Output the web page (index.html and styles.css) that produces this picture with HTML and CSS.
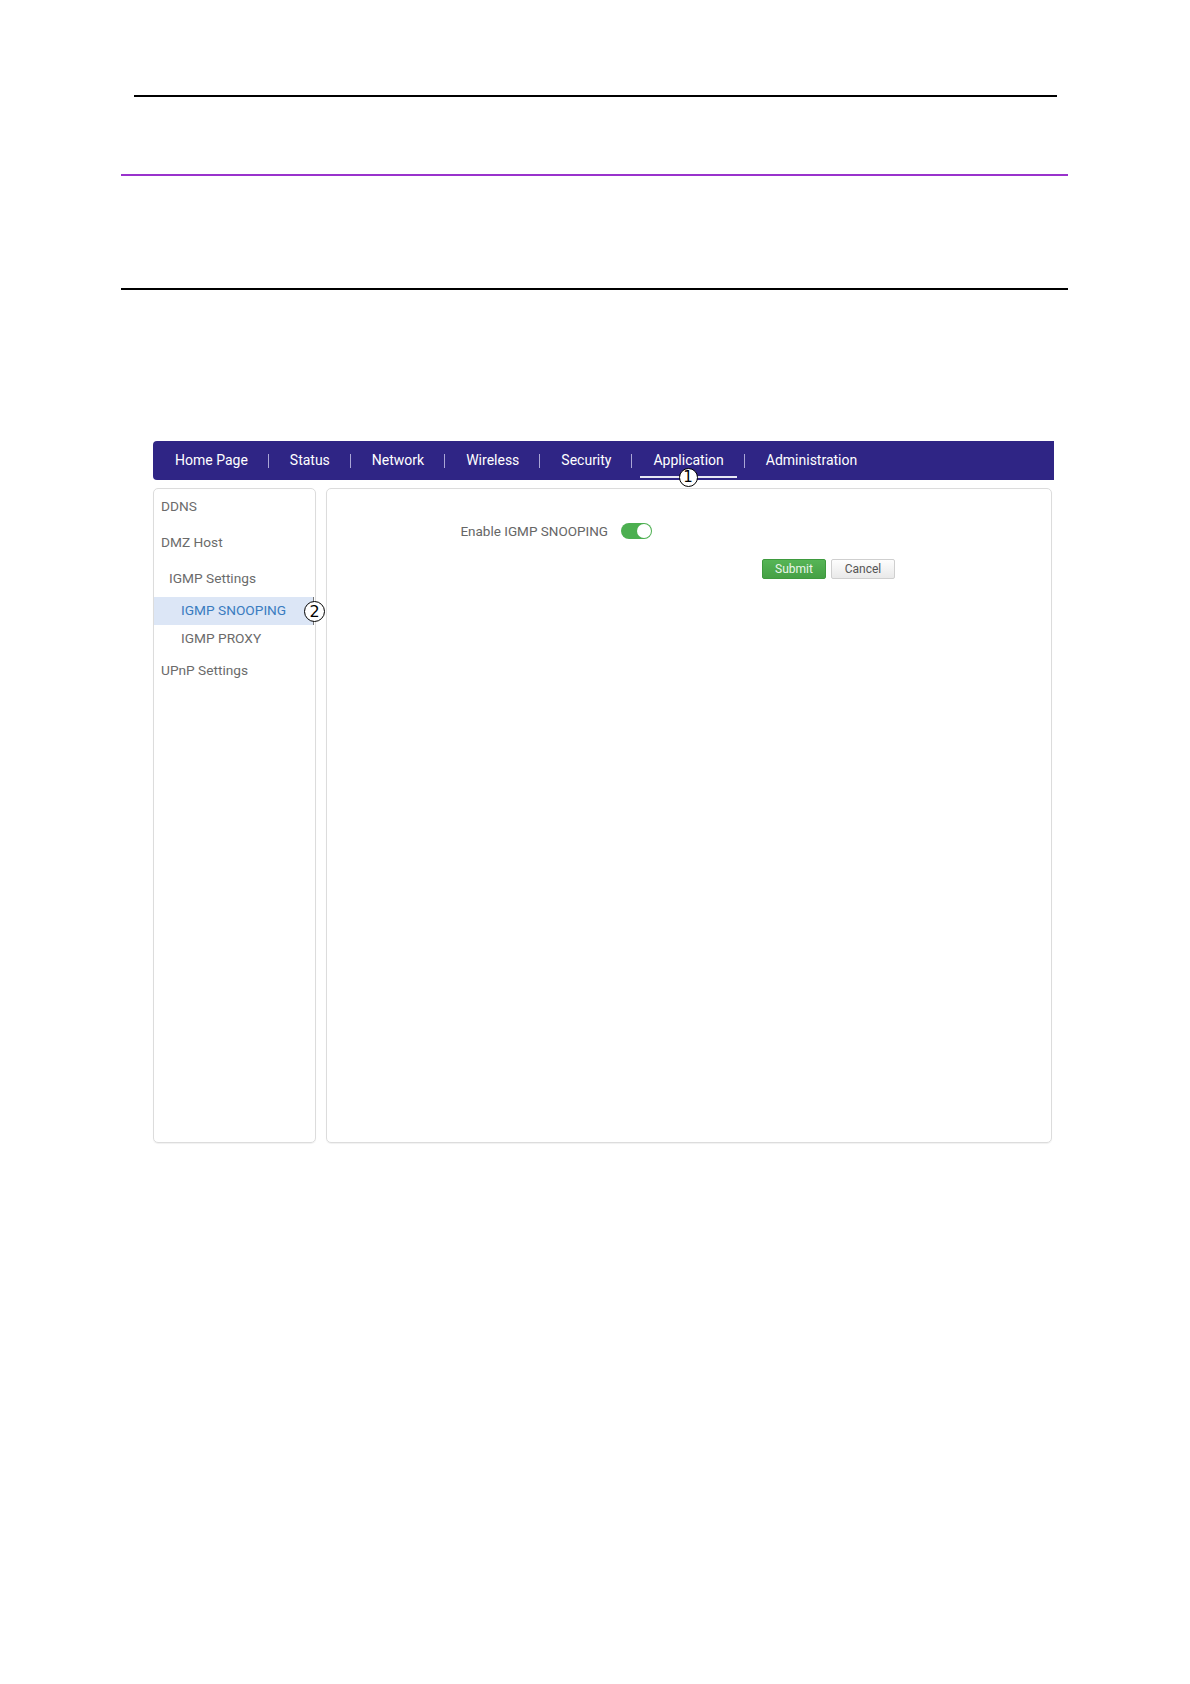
FILE: index.html
```html
<!DOCTYPE html>
<html lang="en">
<head>
    <meta charset="UTF-8">
    <meta name="viewport" content="width=device-width, initial-scale=1.0">
    <title>IGMP SNOOPING</title>
    <link rel="stylesheet" href="styles.css">
</head>
<body>
    <div class="page">
        <!-- Lineas del documento -->
        <div class="rule rule-top"></div>
        <div class="rule rule-purple"></div>
        <div class="rule rule-bottom"></div>

        <div class="app">
            <ul class="nav">
                <li>Home Page</li>
                <li>Status</li>
                <li>Network</li>
                <li>Wireless</li>
                <li>Security</li>
                <li class="active">Application<span class="mark mark-nav">1</span></li>
                <li>Administration</li>
            </ul>

            <div class="panels">
                <ul class="sidebar">
                    <li>DDNS</li>
                    <li>DMZ Host</li>
                    <li class="group">IGMP Settings</li>
                    <li class="sub active">IGMP SNOOPING<span class="mark mark-side">2</span></li>
                    <li class="sub">IGMP PROXY</li>
                    <li>UPnP Settings</li>
                </ul>

                <div class="content">
                    <div class="form-row">
                        <label class="label">Enable IGMP SNOOPING</label>
                        <span class="switch on"><span class="knob"></span></span>
                    </div>
                    <div class="buttons">
                        <button class="btn btn-submit">Submit</button>
                        <button class="btn btn-cancel">Cancel</button>
                    </div>
                </div>
            </div>
        </div>
    </div>
</body>
</html>
```

FILE: styles.css
```css
body {
    margin: 0;
    padding: 0;
    background-color: #fff;
    font-family: Roboto, "Liberation Sans", Arial, sans-serif;
}

.page {
    padding-top: 95px;
    padding-bottom: 100px;
}

.rule {
    height: 2px;
}

.rule-top {
    margin: 0 133px 0 134px;
    background-color: #000;
}

.rule-purple {
    margin: 77px 122px 0 121px;
    background-color: #9932cc;
}

.rule-bottom {
    margin: 112px 122px 0 121px;
    background-color: #000;
}

.app {
    margin-top: 151px;
    margin-left: 153px;
    width: 901px;
}

.nav {
    list-style: none;
    margin: 0;
    padding: 0 0 0 1px;
    height: 39px;
    display: flex;
    align-items: center;
    background-color: #2f2585;
    border-radius: 4px 0 0 4px;
}

.nav li {
    position: relative;
    padding: 0 21px;
    color: #fff;
    font-size: 14px;
    height: 39px;
    line-height: 39px;
}

.nav li + li::before {
    content: "";
    position: absolute;
    left: -1px;
    top: 13px;
    height: 14px;
    border-left: 1px solid #aaa6d6;
}

.nav li.active::after {
    content: "";
    position: absolute;
    left: 8px;
    right: 8px;
    bottom: 2px;
    height: 2px;
    background-color: #e8e8f4;
}

.mark {
    position: absolute;
    z-index: 2;
    box-sizing: border-box;
    border: 1px solid #000;
    border-radius: 50%;
    background-color: #fff;
    color: #000;
    font-family: "DejaVu Sans", sans-serif;
    text-align: center;
}

.mark-nav {
    width: 19px;
    height: 19px;
    line-height: 17px;
    font-size: 15px;
    left: 50%;
    top: 27px;
    margin-left: -10px;
}

.panels {
    display: flex;
    gap: 10px;
    margin-top: 8px;
    height: 655px;
}

.sidebar {
    list-style: none;
    margin: 0;
    padding: 0;
    width: 163px;
    box-sizing: border-box;
    border: 1px solid #dcdcdc;
    border-radius: 5px;
    box-shadow: 0 1px 1px rgba(0, 0, 0, 0.06);
}

.sidebar li {
    position: relative;
    height: 36px;
    line-height: 35px;
    padding-left: 7px;
    font-size: 13.7px;
    color: #6b6b6b;
}

.sidebar li.group {
    padding-left: 15px;
}

.sidebar li.sub {
    height: 28px;
    line-height: 27px;
    padding-left: 27px;
}

.sidebar li.active {
    background-color: #dce6f6;
    color: #3a7cc0;
    border-right: 1px solid #777;
    margin-right: 1px;
}

.mark-side {
    width: 21px;
    height: 21px;
    line-height: 19px;
    font-size: 16px;
    left: 150px;
    top: 4px;
}

.content {
    width: 726px;
    box-sizing: border-box;
    border: 1px solid #dcdcdc;
    border-radius: 5px;
    box-shadow: 0 1px 1px rgba(0, 0, 0, 0.06);
    padding-top: 33px;
}

.form-row {
    display: flex;
    align-items: center;
    height: 18px;
}

.label {
    width: 281px;
    text-align: right;
    font-size: 13.5px;
    color: #666;
}

.switch {
    position: relative;
    margin-left: 13px;
    width: 31px;
    height: 16px;
    border-radius: 8px;
    background-color: #4caf50;
}

.switch .knob {
    position: absolute;
    right: 1px;
    top: 1px;
    width: 14px;
    height: 14px;
    border-radius: 50%;
    background-color: #fff;
}

.buttons {
    display: flex;
    gap: 5px;
    margin-top: 19px;
    padding-left: 435px;
}

.btn {
    width: 64px;
    height: 20px;
    padding: 0;
    font-family: Roboto, "Liberation Sans", Arial, sans-serif;
    font-size: 12px;
    border-radius: 2px;
    cursor: pointer;
}

.btn-submit {
    color: #eaf6ea;
    border: 1px solid #3e9a3e;
    background: linear-gradient(#56b556, #45a045);
}

.btn-cancel {
    color: #555;
    border: 1px solid #cfcfcf;
    background: linear-gradient(#fdfdfd, #e9e9e9);
}
```
